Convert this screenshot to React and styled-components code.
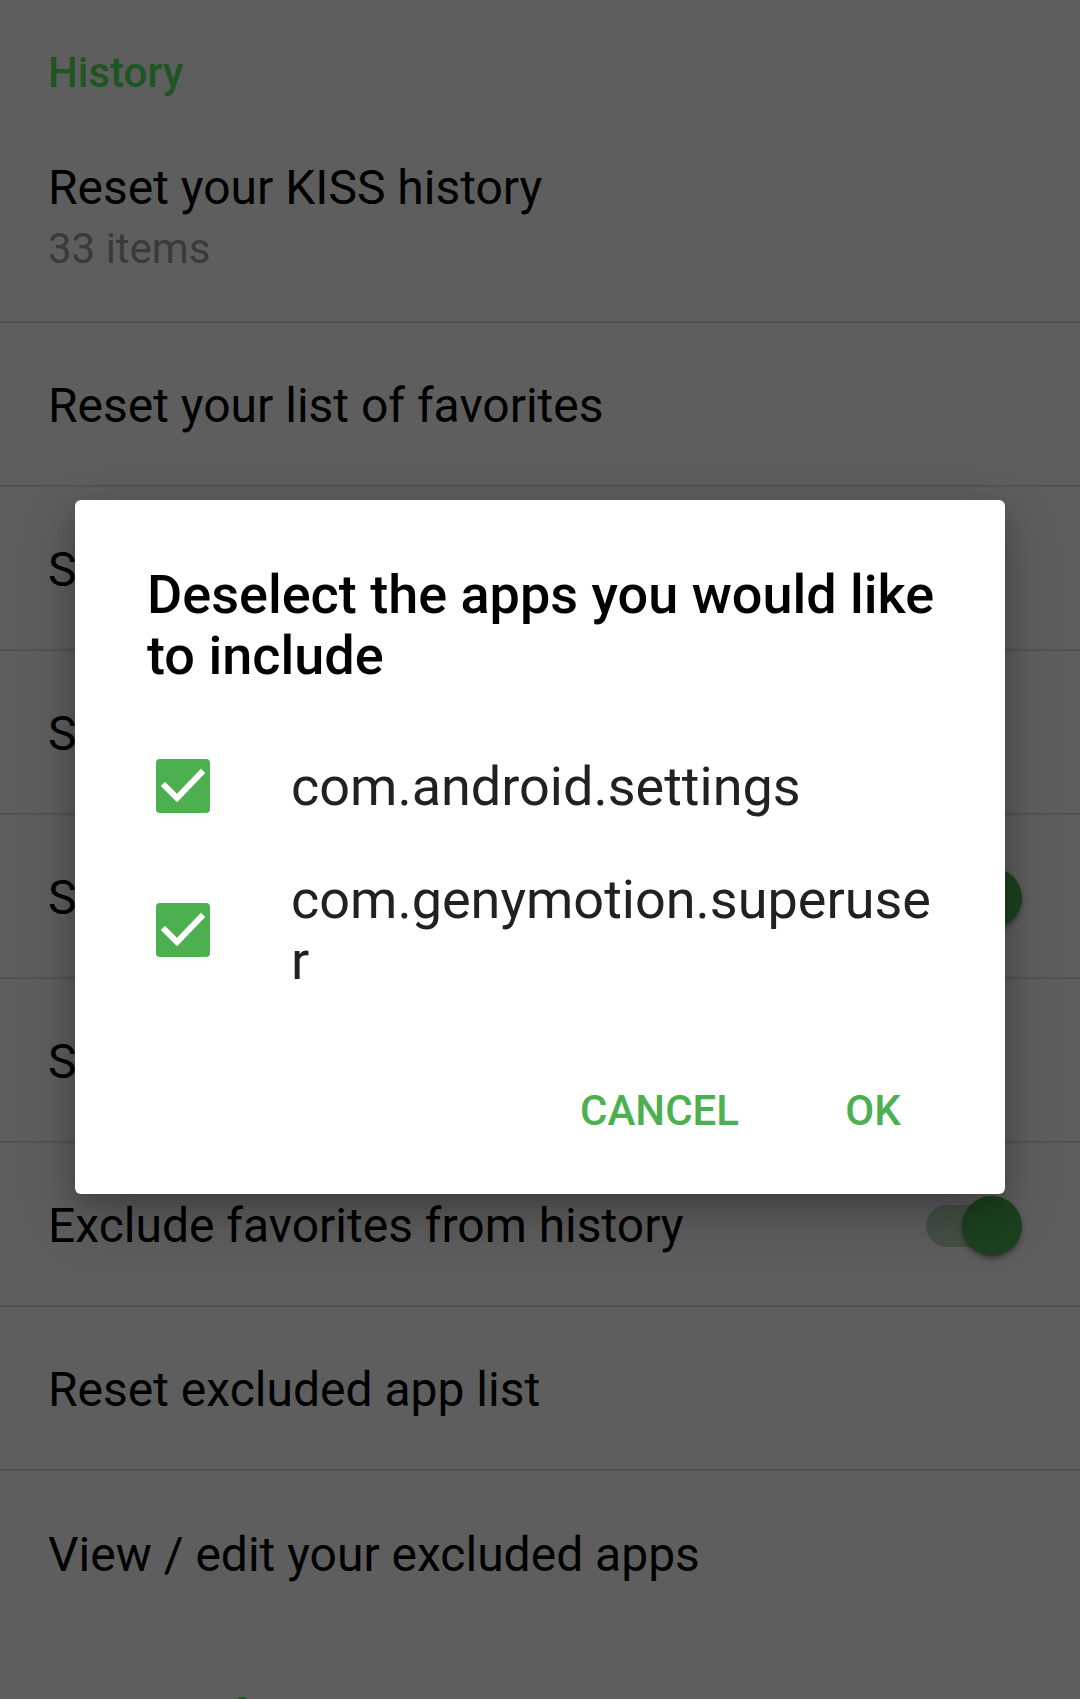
import React from 'react';
import styled, { createGlobalStyle } from 'styled-components';

const GlobalStyle = createGlobalStyle`
  html, body {
    margin: 0;
    padding: 0;
    background: #5e5e5e;
  }
  body {
    font-family: Roboto, "Liberation Sans", sans-serif;
  }
  * { box-sizing: border-box; }
`;

const Screen = styled.div`
  position: relative;
  width: 1080px;
  height: 1699px;
  overflow: hidden;
  background: #5e5e5e;
  font-family: Roboto, "Liberation Sans", sans-serif;
`;

const CategoryHeader = styled.div`
  padding: ${p => p.$top}px 48px 16px;
  font-size: 42px;
  line-height: 42px;
  font-weight: 500;
  color: #1e5623;
`;

const PrefRow = styled.div`
  display: flex;
  align-items: center;
  justify-content: space-between;
  min-height: ${p => (p.$tall ? 213 : 164)}px;
  padding: 4px 48px 0;
  border-bottom: ${p => (p.$last ? 'none' : '2px solid #535353')};
`;

const PrefText = styled.div`
  display: flex;
  flex-direction: column;
  white-space: nowrap;
`;

const PrefTitle = styled.div`
  font-size: 48px;
  line-height: 60px;
  color: #000;
`;

const PrefSummary = styled.div`
  margin-top: 3px;
  font-size: 42px;
  line-height: 56px;
  color: #3a3a3a;
`;

const Switch = styled.div`
  position: relative;
  flex-shrink: 0;
  width: 96px;
  height: 60px;
  margin-right: 10px;
`;

const Track = styled.div`
  position: absolute;
  left: 0;
  right: 6px;
  top: 9px;
  height: 42px;
  border-radius: 21px;
  background: #465046;
`;

const Thumb = styled.div`
  position: absolute;
  right: 0;
  top: 0;
  width: 60px;
  height: 60px;
  border-radius: 50%;
  background: #1c421f;
  box-shadow: 0 3px 5px rgba(0, 0, 0, 0.35);
`;

const Dialog = styled.div`
  position: absolute;
  left: 75px;
  top: 500px;
  width: 930px;
  background: #ffffff;
  border-radius: 6px;
  box-shadow: 0 24px 60px rgba(0, 0, 0, 0.22), 0 8px 24px rgba(0, 0, 0, 0.18);
  font-family: Roboto, "Liberation Sans", sans-serif;
`;

const DialogTitle = styled.div`
  padding: 64px 60px 0 72px;
  font-size: 54px;
  line-height: 61px;
  font-weight: 500;
  color: #000;
`;

const ChoiceList = styled.div`
  display: flex;
  flex-direction: column;
  padding-top: 28px;
`;

const ChoiceItem = styled.div`
  display: flex;
  align-items: center;
  min-height: 144px;
  padding: 0 64px 0 60px;
`;

const CheckZone = styled.div`
  flex-shrink: 0;
  width: 96px;
  margin-right: 60px;
  display: flex;
  justify-content: center;
`;

const CheckBox = styled.div`
  width: 54px;
  height: 54px;
  border-radius: 4px;
  background: ${p => (p.$checked ? '#4caf50' : 'transparent')};
  display: flex;
  align-items: center;
  justify-content: center;
`;

const ChoiceText = styled.div`
  flex: 1;
  min-width: 0;
  font-size: 54px;
  line-height: 61px;
  color: #212121;
  word-break: break-all;
`;

const ButtonBar = styled.div`
  display: flex;
  justify-content: flex-end;
  gap: 14px;
  padding: 54px 36px 30px;
`;

const DialogButton = styled.button`
  min-width: 192px;
  height: 108px;
  padding: 0 24px;
  border: none;
  background: transparent;
  font-family: Roboto, "Liberation Sans", sans-serif;
  font-size: 42px;
  font-weight: 500;
  color: #4caf50;
  text-transform: uppercase;
  display: flex;
  align-items: center;
  justify-content: center;
`;

const CheckMark = () => (
  <svg width="54" height="54" viewBox="0 0 54 54">
    <polyline
      points="9,27 21,39 45,14"
      fill="none"
      stroke="#ffffff"
      strokeWidth="6"
      strokeLinecap="square"
      strokeLinejoin="miter"
    />
  </svg>
);

const prefs = [
  { title: 'Reset your KISS history', summary: '33 items' },
  { title: 'Reset your list of favorites' },
  { title: 'Select history mode' },
  { title: 'Set history length' },
  { title: 'Show history at startup', toggle: true },
  { title: 'Select apps to exclude from history' },
  { title: 'Exclude favorites from history', toggle: true },
  { title: 'Reset excluded app list' },
  { title: 'View / edit your excluded apps' },
];

const choices = ['com.android.settings', 'com.genymotion.superuser'];

export default function App() {
  return (
    <>
      <GlobalStyle />
      <Screen>
        <CategoryHeader $top={52}>History</CategoryHeader>
        {prefs.map((p, i) => (
          <PrefRow key={p.title} $tall={!!p.summary} $last={i === prefs.length - 1}>
            <PrefText>
              <PrefTitle>{p.title}</PrefTitle>
              {p.summary && <PrefSummary>{p.summary}</PrefSummary>}
            </PrefText>
            {p.toggle && (
              <Switch>
                <Track />
                <Thumb />
              </Switch>
            )}
          </PrefRow>
        ))}
        <CategoryHeader $top={59}>User interface</CategoryHeader>

        <Dialog>
          <DialogTitle>Deselect the apps you would like to include</DialogTitle>
          <ChoiceList>
            {choices.map(c => (
              <ChoiceItem key={c}>
                <CheckZone>
                  <CheckBox $checked>
                    <CheckMark />
                  </CheckBox>
                </CheckZone>
                <ChoiceText>{c}</ChoiceText>
              </ChoiceItem>
            ))}
          </ChoiceList>
          <ButtonBar>
            <DialogButton>Cancel</DialogButton>
            <DialogButton>OK</DialogButton>
          </ButtonBar>
        </Dialog>
      </Screen>
    </>
  );
}
